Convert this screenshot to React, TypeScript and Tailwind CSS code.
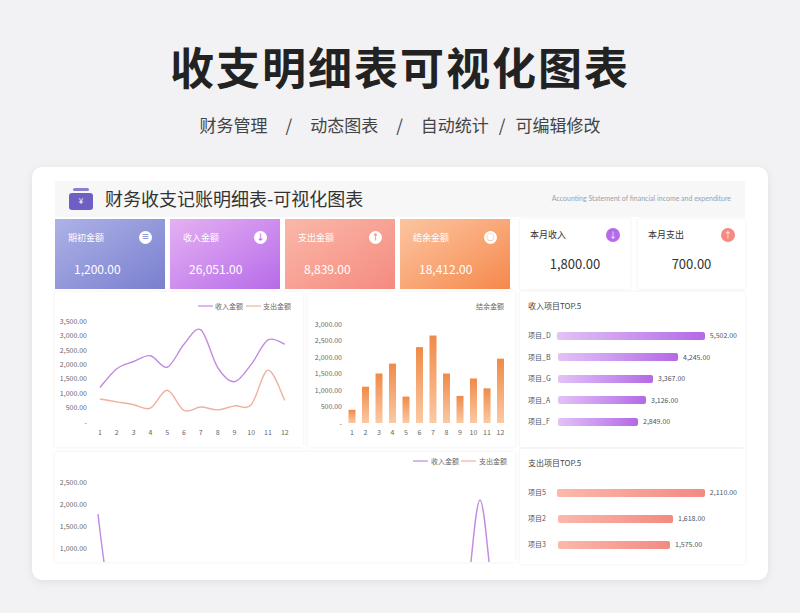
import React from "react";

const F = { fontFamily: '"Noto Sans CJK SC","Noto Sans",sans-serif' };

function smooth(pts: [number, number][]) {
  let d = `M${pts[0][0]},${pts[0][1]}`;
  for (let i = 0; i < pts.length - 1; i++) {
    const p0 = pts[i - 1] || pts[i], p1 = pts[i], p2 = pts[i + 1], p3 = pts[i + 2] || p2;
    const c1x = p1[0] + (p2[0] - p0[0]) / 6, c1y = p1[1] + (p2[1] - p0[1]) / 6;
    const c2x = p2[0] - (p3[0] - p1[0]) / 6, c2y = p2[1] - (p3[1] - p1[1]) / 6;
    d += ` C${c1x},${c1y} ${c2x},${c2y} ${p2[0]},${p2[1]}`;
  }
  return d;
}

const inc = [1200, 1850, 2100, 2300, 1900, 2700, 3200, 1900, 1400, 2000, 2850, 2700];
const exp = [800, 700, 600, 480, 1100, 400, 520, 420, 560, 600, 1800, 750];
const bal = [400, 1100, 1500, 1800, 800, 2300, 2650, 1500, 820, 1350, 1050, 1950];

function LineChart() {
  const x = (i: number) => 45 + i * 16.8;
  const y = (v: number) => 130 - v * 0.0288;
  const ticks = [3500, 3000, 2500, 2000, 1500, 1000, 500, 0];
  return (
    <svg width="248" height="155" viewBox="0 0 248 155">
      <line x1="143" y1="14" x2="158" y2="14" stroke="#c08ae0" strokeWidth="1.2" />
      <text x="160" y="17" fontSize="7" fill="#666">收入金额</text>
      <line x1="191" y1="14" x2="206" y2="14" stroke="#f0b0a0" strokeWidth="1.2" />
      <text x="208" y="17" fontSize="7" fill="#666">支出金额</text>
      {ticks.map((t) => (
        <text key={t} x="32" y={y(t) + 2.5} fontSize="7" fill="#666" textAnchor="end">
          {t === 0 ? "-" : t.toLocaleString("en-US") + ".00"}
        </text>
      ))}
      {inc.map((_, i) => (
        <text key={i} x={x(i)} y="143" fontSize="7" fill="#666" textAnchor="middle">{i + 1}</text>
      ))}
      <path d={smooth(inc.map((v, i) => [x(i), y(v)]))} fill="none" stroke="#c08ae0" strokeWidth="1.4" />
      <path d={smooth(exp.map((v, i) => [x(i), y(v)]))} fill="none" stroke="#f0b0a0" strokeWidth="1.4" />
    </svg>
  );
}

function BarChart() {
  const x = (i: number) => 44 + i * 13.5;
  const y = (v: number) => 131 - v * 0.033;
  const ticks = [3000, 2500, 2000, 1500, 1000, 500, 0];
  return (
    <svg width="207" height="155" viewBox="0 0 207 155">
      <defs>
        <linearGradient id="bg" x1="0" y1="0" x2="0" y2="1">
          <stop offset="0" stopColor="#f08a48" />
          <stop offset="1" stopColor="#fbc9a4" />
        </linearGradient>
      </defs>
      <text x="196" y="17" fontSize="7" fill="#666" textAnchor="end">结余金额</text>
      {ticks.map((t) => (
        <text key={t} x="34" y={y(t) + 2.5} fontSize="7" fill="#666" textAnchor="end">
          {t === 0 ? "-" : t.toLocaleString("en-US") + ".00"}
        </text>
      ))}
      {bal.map((v, i) => (
        <g key={i}>
          <rect x={x(i) - 3.5} y={y(v)} width="7" height={v * 0.033} fill="url(#bg)" />
          <text x={x(i)} y="143" fontSize="7" fill="#666" textAnchor="middle">{i + 1}</text>
        </g>
      ))}
    </svg>
  );
}

function BottomChart() {
  const y = (v: number) => 30 - (v - 2500) * 0.0444;
  const ticks = [2500, 2000, 1500, 1000];
  return (
    <svg width="460" height="110" viewBox="0 0 460 110" className="block">
      <line x1="358" y1="9" x2="373" y2="9" stroke="#c08ae0" strokeWidth="1.2" />
      <text x="376" y="12" fontSize="7" fill="#666">收入金额</text>
      <line x1="406" y1="9" x2="421" y2="9" stroke="#f0b0a0" strokeWidth="1.2" />
      <text x="424" y="12" fontSize="7" fill="#666">支出金额</text>
      {ticks.map((t) => (
        <text key={t} x="32" y={y(t) + 2.5} fontSize="7" fill="#666" textAnchor="end">
          {t.toLocaleString("en-US") + ".00"}
        </text>
      ))}
      <path d="M43,62 C45,80 47,95 49,110" fill="none" stroke="#c08ae0" strokeWidth="1.4" />
      <path d="M416,110 C419,80 422,48 425,48 C428,48 431,80 434,110" fill="none" stroke="#c08ae0" strokeWidth="1.4" />
    </svg>
  );
}

const kpis = [
  { t: "期初金额", v: "1,200.00", c: "from-[#aeb2e6] to-[#7a7fcf]", ic: "≡", tc: "text-[#7a7fcf]" },
  { t: "收入金额", v: "26,051.00", c: "from-[#e5b0f2] to-[#b76ae8]", ic: "↓", tc: "text-[#b76ae8]" },
  { t: "支出金额", v: "8,839.00", c: "from-[#f9b8a8] to-[#f58a80]", ic: "↑", tc: "text-[#f58a80]" },
  { t: "结余金额", v: "18,412.00", c: "from-[#fbc5a0] to-[#f5884a]", ic: "○", tc: "text-[#f5884a]" },
];

function HBar({ label, v, w, grad }: { label: string; v: string; w: number; grad: string }) {
  return (
    <div className="flex items-center h-[8px]">
      <span className="w-[30px] text-[7px] text-gray-600">{label}</span>
      <div className={`h-[8px] rounded-[2px] bg-gradient-to-r ${grad}`} style={{ width: w }} />
      <span className="ml-[5px] text-[7px] text-gray-600">{v}</span>
    </div>
  );
}

export default function App() {
  return (
    <div className="w-[800px] h-[613px] bg-[#f2f2f4] overflow-hidden flex flex-col items-center" style={F}>
      <h1 className="mt-[36px] text-[44px] leading-[60px] font-bold text-[#222] tracking-[2px]">收支明细表可视化图表</h1>
      <div className="mt-[16px] flex items-center gap-[18px] text-[17px] text-[#444]">
        <span>财务管理</span><span>/</span><span>动态图表</span><span>/</span><span>自动统计</span><span className="-ml-[8px]">/</span><span className="-ml-[8px]">可编辑修改</span>
      </div>
      <div className="mt-[29px] w-[736px] h-[413px] bg-white rounded-[10px] shadow-[0_2px_10px_rgba(0,0,0,0.08)] px-[23px] pt-[14px] overflow-hidden">
        <div className="h-[36px] bg-[#f7f7f7] flex items-center px-[14px]">
          <div className="relative w-[24px] h-[22px]">
            <div className="absolute left-[4px] top-0 w-[16px] h-[3px] rounded-sm bg-[#8b7fd0]" />
            <div className="absolute left-0 top-[5px] w-[24px] h-[17px] rounded-[3px] bg-[#6f5fc4] flex items-center justify-center text-white text-[8px]">¥</div>
          </div>
          <span className="ml-[12px] text-[18px] text-[#333]">财务收支记账明细表-可视化图表</span>
          <span className="ml-auto text-[7px] text-gray-400" style={{ fontFamily: "Lato,sans-serif" }}>Accounting Statement of financial income and expenditure</span>
        </div>
        <div className="mt-[2px] flex gap-[5px] h-[70px]">
          {kpis.map((k) => (
            <div key={k.t} className={`w-[110px] bg-gradient-to-br ${k.c} text-white px-[13px] pt-[12px]`}>
              <div className="flex justify-between items-center text-[9px]">
                <span>{k.t}</span>
                <span className={`w-[13px] h-[13px] rounded-full bg-white flex items-center justify-center text-[8px] font-bold leading-none ${k.tc}`}>{k.ic}</span>
              </div>
              <div className="mt-[16px] text-[12px] pl-[6px]">{k.v}</div>
            </div>
          ))}
          <div className="ml-[5px] w-[110px] bg-white shadow-[0_0_3px_rgba(0,0,0,0.08)] px-[10px] pt-[9px]">
            <div className="flex justify-between items-center text-[9px] text-[#333]">
              <span>本月收入</span>
              <span className="w-[14px] h-[14px] rounded-full bg-[#b76ae8] text-white text-[8px] flex items-center justify-center">↓</span>
            </div>
            <div className="mt-[12px] text-[13px] text-center text-[#333]">1,800.00</div>
          </div>
          <div className="ml-[3px] w-[107px] bg-white shadow-[0_0_3px_rgba(0,0,0,0.08)] px-[10px] pt-[9px]">
            <div className="flex justify-between items-center text-[9px] text-[#333]">
              <span>本月支出</span>
              <span className="w-[14px] h-[14px] rounded-full bg-[#f58a80] text-white text-[8px] flex items-center justify-center">↑</span>
            </div>
            <div className="mt-[12px] text-[13px] text-center text-[#333]">700.00</div>
          </div>
        </div>
        <div className="mt-[3px] flex gap-[5px]">
          <div className="flex flex-col gap-[5px]">
            <div className="flex gap-[5px]">
              <div className="bg-white shadow-[0_0_3px_rgba(0,0,0,0.08)]"><LineChart /></div>
              <div className="bg-white shadow-[0_0_3px_rgba(0,0,0,0.08)]"><BarChart /></div>
            </div>
            <div className="bg-white shadow-[0_0_3px_rgba(0,0,0,0.08)] w-[460px] h-[110px]"><BottomChart /></div>
          </div>
          <div className="w-[225px] flex flex-col">
            <div className="bg-white shadow-[0_0_3px_rgba(0,0,0,0.08)] h-[155px] px-[8px] pt-[8px]">
              <div className="text-[8px] text-[#444]">收入项目TOP.5</div>
              <div className="mt-[20px] flex flex-col gap-[13.5px]">
                <HBar label="项目_D" v="5,502.00" w={155} grad="from-[#e2c2f6] to-[#b468e6]" />
                <HBar label="项目_B" v="4,245.00" w={120} grad="from-[#e2c2f6] to-[#b468e6]" />
                <HBar label="项目_G" v="3,367.00" w={95} grad="from-[#e2c2f6] to-[#b468e6]" />
                <HBar label="项目_A" v="3,126.00" w={88} grad="from-[#e2c2f6] to-[#b468e6]" />
                <HBar label="项目_F" v="2,849.00" w={80} grad="from-[#e2c2f6] to-[#b468e6]" />
              </div>
            </div>
            <div className="bg-white shadow-[0_0_3px_rgba(0,0,0,0.08)] h-[115px] px-[8px] pt-[8px] mt-[2px]">
              <div className="text-[8px] text-[#444]">支出项目TOP.5</div>
              <div className="mt-[20px] flex flex-col gap-[18px]">
                <HBar label="项目5" v="2,110.00" w={150} grad="from-[#fbb8ac] to-[#f38a80]" />
                <HBar label="项目2" v="1,618.00" w={115} grad="from-[#fbb8ac] to-[#f38a80]" />
                <HBar label="项目3" v="1,575.00" w={112} grad="from-[#fbb8ac] to-[#f38a80]" />
              </div>
            </div>
          </div>
        </div>
      </div>
    </div>
  );
}
